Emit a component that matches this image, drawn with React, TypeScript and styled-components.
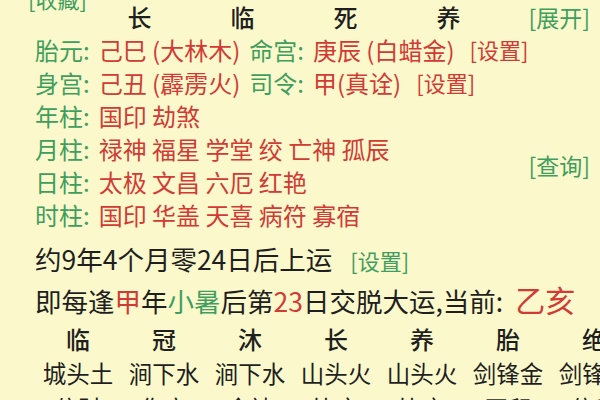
import React from 'react'
import styled, { createGlobalStyle } from 'styled-components'

const GlobalStyle = createGlobalStyle`
  html, body {
    margin: 0;
    padding: 0;
    background: #fbf9cc;
  }
  body {
    font-family: "Noto Sans CJK SC", "Noto Sans", sans-serif;
    color: #1f1f1f;
    width: 600px;
    height: 400px;
    overflow: hidden;
  }
`

const green = '#3f9e5e'
const red = '#d23a35'

interface IInfoRow {
  label: string
  value: string
  second: string
  secondValue: string
}

const infoRows: IInfoRow[] = [
  { label: '胎元', value: '己巳 (大林木)', second: '命宫', secondValue: '庚辰 (白蜡金)' },
  { label: '身宫', value: '己丑 (霹雳火)', second: '司令', secondValue: '甲(真诠)' },
]

const pillars = [
  { label: '年柱', stars: '国印 劫煞' },
  { label: '月柱', stars: '禄神 福星 学堂 绞 亡神 孤辰' },
  { label: '日柱', stars: '太极 文昌 六厄 红艳' },
  { label: '时柱', stars: '国印 华盖 天喜 病符 寡宿' },
]

const headStages = ['长', '临', '死', '养']
const luckStages = ['临', '冠', '沐', '长', '养', '胎', '绝']
const luckNayin = ['城头土', '涧下水', '涧下水', '山头火', '山头火', '剑锋金', '剑锋金']
const luckGods = ['偏财', '伤官', '食神', '比肩', '比肩', '正印', '偏印']

const App: React.FC = () => {
  return (
    <>
      <GlobalStyle />
      <Page>
        <HeadRow>
          <Collect>[收藏]</Collect>
          {headStages.map((s, i) => (
            <Stage key={i}>{s}</Stage>
          ))}
          <Action>[展开]</Action>
        </HeadRow>

        {infoRows.map((row) => (
          <Line key={row.label}>
            <Label>{row.label}:</Label>
            <Red>{row.value}</Red>
            <Label>{row.second}:</Label>
            <Red>{row.secondValue}</Red>
            <Setting>[设置]</Setting>
          </Line>
        ))}

        <PillarBlock>
          <div>
            {pillars.map((p) => (
              <Line key={p.label}>
                <Label>{p.label}:</Label>
                <Red>{p.stars}</Red>
              </Line>
            ))}
          </div>
          <Action>[查询]</Action>
        </PillarBlock>

        <Sentence $first>
          约9年4个月零24日后上运
          <SmallLink>[设置]</SmallLink>
        </Sentence>
        <Sentence>
          即每逢<Tint $c={red}>甲</Tint>年<Tint $c={green}>小暑</Tint>后第<Tint $c={red}>23</Tint>日交脱大运,当前:
          <Current>乙亥</Current>
        </Sentence>

        <LuckGrid>
          {luckStages.map((s, i) => (
            <LuckStage key={i}>{s}</LuckStage>
          ))}
          {luckNayin.map((s, i) => (
            <LuckCell key={'n' + i}>{s}</LuckCell>
          ))}
          {luckGods.map((s, i) => (
            <LuckCell key={'g' + i}>{s}</LuckCell>
          ))}
        </LuckGrid>
      </Page>
    </>
  )
}

export default App

const Page = styled.div`
  padding-left: 35px;
  width: 600px;
  box-sizing: border-box;
  overflow: hidden;
`

const HeadRow = styled.div`
  display: grid;
  grid-template-columns: 53px repeat(4, 103px) 1fr;
  align-items: center;
  height: 28px;
  margin-bottom: 5px;
`

const Collect = styled.span`
  color: ${green};
  font-size: 22px;
  line-height: 22px;
  align-self: start;
  margin-top: -13px;
  margin-left: -7px;
  white-space: nowrap;
`

const Stage = styled.span`
  text-align: center;
  font-size: 24px;
  font-weight: 500;
  line-height: 28px;
`

const Action = styled.span`
  color: ${green};
  font-size: 23px;
  justify-self: end;
  align-self: center;
  padding-right: 10px;
  white-space: nowrap;
`

const Line = styled.div`
  display: flex;
  gap: 9px;
  font-size: 24px;
  line-height: 33px;
  height: 33px;
  white-space: nowrap;
`

const Label = styled.span`
  color: ${green};
`

const Red = styled.span`
  color: ${red};
`

const Setting = styled.span`
  color: ${red};
  font-size: 22px;
  margin-left: 6px;
`

const PillarBlock = styled.div`
  display: flex;
  justify-content: space-between;
  align-items: center;
`

const Sentence = styled.div<{ $first?: boolean }>`
  font-size: 26.5px;
  line-height: 39px;
  white-space: nowrap;
  margin-top: ${(p) => (p.$first ? '8px' : '0')};
`

const SmallLink = styled.span`
  color: ${green};
  font-size: 22px;
  margin-left: 18px;
`

const Tint = styled.span<{ $c: string }>`
  color: ${(p) => p.$c};
`

const Current = styled.span`
  color: ${red};
  font-size: 30px;
  margin-left: 12px;
`

const LuckGrid = styled.div`
  display: grid;
  grid-template-columns: repeat(7, 86px);
  grid-auto-rows: 35px;
  margin-top: 1px;
  width: 602px;
`

const LuckStage = styled.span`
  text-align: center;
  font-size: 24px;
  font-weight: 500;
  line-height: 35px;
`

const LuckCell = styled.span`
  text-align: center;
  font-size: 23.5px;
  line-height: 35px;
  white-space: nowrap;
`
